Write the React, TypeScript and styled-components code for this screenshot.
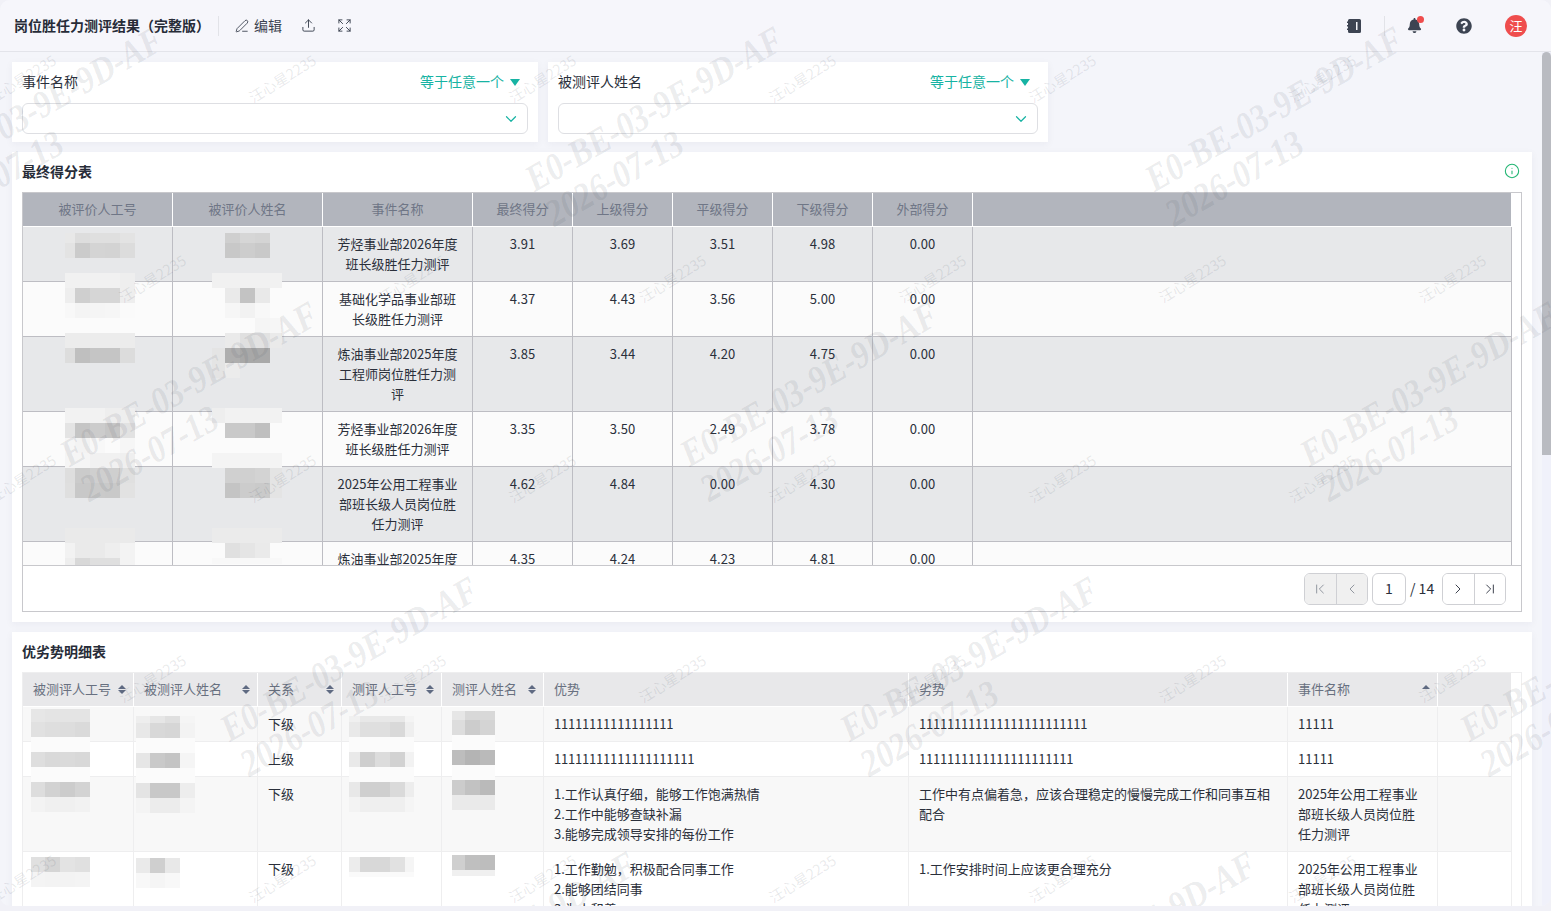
import React from "react";
import styled, { createGlobalStyle } from "styled-components";
import {
  ChevronDown,
  ChevronFirst,
  ChevronLast,
  ChevronLeft,
  ChevronRight,
  Expand,
  Info,
  PenLine,
  Upload,
} from "lucide-react";
import { FaBell, FaQuestionCircle } from "react-icons/fa";

const FONT = `"Noto Sans CJK SC", "Noto Sans", sans-serif`;

const GlobalStyle = createGlobalStyle`
  html, body {
    margin: 0;
    height: 911px;
    overflow: hidden;
    background: #f1f1f7;
    font-family: ${FONT};
  }
  * { box-sizing: border-box; }
`;

const Shell = styled.div`
  position: relative;
  height: 906px;
  display: flex;
  flex-direction: column;
  overflow: hidden;
  border-radius: 10px;
  background: #f4f5fa;
`;

const Header = styled.header`
  flex: none;
  height: 52px;
  display: flex;
  align-items: center;
  padding: 0 24px 0 14px;
  background: #f6f6fb;
  border-bottom: 1px solid #e3e4ea;
  color: #333a48;
`;

const PageTitle = styled.h1`
  margin: 0 0 2px;
  font-size: 14px;
  font-weight: 700;
  color: #272c38;
  white-space: nowrap;
`;

const Divider = styled.span`
  width: 1px;
  height: 20px;
  background: #e2e3e8;
  margin: ${(p: { $m: string }) => p.$m};
`;

const ToolButton = styled.span`
  display: inline-flex;
  align-items: center;
  gap: 5px;
  font-size: 14px;
  margin-right: ${(p: { $mr: number }) => p.$mr}px;
  color: #3b4250;
`;

const ToolLabel = styled.span`
  margin-bottom: 2px;
`;

const Spacer = styled.div`
  flex: 1;
`;

const IconSlot = styled.span`
  position: relative;
  display: inline-flex;
  color: #3d4452;
  margin-left: ${(p: { $ml: number }) => p.$ml}px;
`;

const RedDot = styled.span`
  position: absolute;
  top: -2px;
  right: -2px;
  width: 7px;
  height: 7px;
  border-radius: 50%;
  background: #ef4d4d;
`;

const Avatar = styled.span`
  width: 22px;
  height: 22px;
  margin-left: 33px;
  border-radius: 50%;
  background: #ef4d4d;
  color: #fff;
  font-size: 13px;
  display: flex;
  align-items: center;
  justify-content: center;
`;

const Body = styled.div`
  flex: 1;
  min-height: 0;
  display: flex;
`;

const Main = styled.main`
  flex: none;
  width: 1542px;
  padding: 10px 10px 0 12px;
  overflow: hidden;
`;

const Scrollbar = styled.div`
  flex: 1;
  background: #f0f1fa;
`;

const Thumb = styled.div`
  height: 403px;
  border-radius: 5px 5px 0 0;
  background: #b9bbc1;
`;

const FilterRow = styled.div`
  display: flex;
  gap: 10px;
  margin-bottom: 10px;
`;

const FilterCard = styled.div`
  width: ${(p: { $w: number }) => p.$w}px;
  height: 80px;
  padding: 9px 10px 0;
  background: #fff;
  box-shadow: 0 2px 8px rgba(30, 40, 80, 0.05);
`;

const FilterTop = styled.div`
  height: 20px;
  margin-bottom: 12px;
  display: flex;
  align-items: center;
  justify-content: space-between;
  font-size: 14px;
  color: #2a2f3a;
`;

const Operator = styled.span`
  display: inline-flex;
  align-items: center;
  gap: 6px;
  margin-right: 8px;
  color: #17b3a3;
`;

const Triangle = styled.i`
  width: 0;
  height: 0;
  border-left: 5.5px solid transparent;
  border-right: 5.5px solid transparent;
  border-top: 7px solid #17b3a3;
  margin-top: 3px;
`;

const SelectBox = styled.div`
  height: 31px;
  padding-right: 7px;
  border: 1px solid #dedfe3;
  border-radius: 6px;
  display: flex;
  align-items: center;
  justify-content: flex-end;
  color: #17b3a3;
`;

const Card = styled.section`
  padding: 0 10px 10px;
  margin-bottom: 10px;
  background: #fff;
  box-shadow: 0 2px 8px rgba(30, 40, 80, 0.05);
`;

const CardHead = styled.div`
  height: 40px;
  padding: 0 2px 2px 0;
  display: flex;
  align-items: center;
  justify-content: space-between;
  font-size: 14px;
  font-weight: 700;
  color: #272c38;
`;

const Frame = styled.div`
  border: 1px solid ${(p: { $line: string }) => p.$line};
  background: #fff;
`;

const ScrollArea = styled.div`
  position: relative;
  height: 372px;
  overflow: hidden;
`;

const OpenArea = styled.div`
  position: relative;
`;

const Table = styled.table`
  width: 1489px;
  table-layout: fixed;
  border-collapse: separate;
  border-spacing: 0;
  font-size: 13px;
  line-height: 20px;
`;

const Th = styled.th<{ $dark?: boolean }>`
  height: 34px;
  padding: 0 10px 1px;
  font-weight: 400;
  text-align: ${(p) => (p.$dark ? "center" : "left")};
  background: ${(p) => (p.$dark ? "#b2b5bd" : "#e8e8ea")};
  color: ${(p) => (p.$dark ? "#6f7686" : "#687080")};
  border-right: 1px solid #fff;
  border-bottom: 1px solid #fff;
`;

const ThInner = styled.span`
  display: flex;
  align-items: center;
  justify-content: space-between;
`;

const SortMark = styled.span`
  display: inline-flex;
  flex-direction: column;
  gap: 1px;
  margin-right: -3px;
`;

const Arrow = styled.i<{ $down?: boolean; $off?: boolean }>`
  width: 0;
  height: 0;
  border-left: 4px solid transparent;
  border-right: 4px solid transparent;
  ${(p) => (p.$down ? "border-top" : "border-bottom")}: 4.5px solid
    ${(p) => (p.$off ? "transparent" : "#5f6a82")};
`;

const Td = styled.td<{ $dark?: boolean; $shade: boolean }>`
  padding: 7px 10px;
  vertical-align: top;
  text-align: ${(p) => (p.$dark ? "center" : "left")};
  color: #2a2f3a;
  background: ${(p) =>
    p.$dark
      ? p.$shade
        ? "#e7e8ea"
        : "#fbfbfb"
      : p.$shade
        ? "#f8f8f8"
        : "#fff"};
  border-right: 1px solid ${(p) => (p.$dark ? "#bdbdc3" : "#eeeeef")};
  border-bottom: 1px solid ${(p) => (p.$dark ? "#bdbdc3" : "#eeeeef")};
`;

const Line = styled.div<{ $digits?: boolean }>`
  white-space: nowrap;
  letter-spacing: ${(p) => (p.$digits ? "-0.2px" : "normal")};
`;

const Pager = styled.div`
  height: 46px;
  padding-right: 15px;
  border-top: 1px solid #c8c8cc;
  display: flex;
  align-items: center;
  justify-content: flex-end;
  font-size: 14px;
  color: #2a2f3a;
`;

const PageGroup = styled.div`
  display: flex;
  width: 64px;
  height: 32px;
  border: 1px solid #cfd0d4;
  border-radius: 6px;
  overflow: hidden;
`;

const PageButton = styled.span<{ $off?: boolean }>`
  flex: 1;
  display: flex;
  align-items: center;
  justify-content: center;
  background: ${(p) => (p.$off ? "#f0f0f0" : "#fff")};
  color: ${(p) => (p.$off ? "#8b909a" : "#2f3542")};
  & + & {
    border-left: 1px solid #cfd0d4;
  }
`;

const PageInput = styled.span`
  width: 34px;
  height: 32px;
  margin-left: 4px;
  padding-bottom: 2px;
  border: 1px solid #cfd0d4;
  border-radius: 6px;
  display: flex;
  align-items: center;
  justify-content: center;
`;

const PageTotal = styled.span`
  margin: 0 8px 2px 4px;
  width: 24px;
  white-space: nowrap;
`;

const MosaicBox = styled.div<{ $left: number; $top: number }>`
  position: absolute;
  left: ${(p) => p.$left}px;
  top: ${(p) => p.$top}px;
  pointer-events: none;
`;

const MosaicRow = styled.div<{ $h: number }>`
  display: flex;
  height: ${(p) => p.$h}px;
`;

const Tile = styled.i<{ $w: number; $c: string }>`
  flex: none;
  width: ${(p) => p.$w}px;
  background: ${(p) => (p.$c === "--" ? "transparent" : `#${p.$c}${p.$c}${p.$c}`)};
`;

const Marks = styled.div`
  position: absolute;
  inset: 0;
  overflow: hidden;
  pointer-events: none;
`;

const SmallMark = styled.span<{ $x: number; $y: number }>`
  position: absolute;
  left: ${(p) => p.$x}px;
  top: ${(p) => p.$y}px;
  transform: translate(-50%, -50%) rotate(-32deg);
  font-size: 14.5px;
  white-space: nowrap;
  color: rgba(70, 75, 90, 0.12);
`;

const BigMark = styled.div<{ $x: number; $y: number }>`
  position: absolute;
  left: ${(p) => p.$x}px;
  top: ${(p) => p.$y}px;
  transform-origin: 0 0;
  transform: rotate(-30deg) scaleX(0.86);
  font-family: "Liberation Serif", serif;
  font-style: italic;
  font-weight: 700;
  font-size: 38px;
  line-height: 40px;
  white-space: nowrap;
  color: rgba(70, 75, 90, 0.11);
`;

type MosaicRows = [number, string][];

const Mosaic = ({ left, top, widths, rows }: { left: number; top: number; widths: number[]; rows: MosaicRows }) => (
  <MosaicBox $left={left} $top={top}>
    {rows.map(([h, shades], i) => (
      <MosaicRow key={i} $h={h}>
        {shades
          .split(" ")
          .filter(Boolean)
          .map((c, j) => (
            <Tile key={j} $w={widths[j]} $c={c} />
          ))}
      </MosaicRow>
    ))}
  </MosaicBox>
);

const finalCols = [150, 150, 150, 100, 100, 100, 100, 100, 539];
const finalHead = ["被评价人工号", "被评价人姓名", "事件名称", "最终得分", "上级得分", "平级得分", "下级得分", "外部得分", ""];
const finalRows: [string[], string[]][] = [
  [["芳烃事业部2026年度", "班长级胜任力测评"], ["3.91", "3.69", "3.51", "4.98", "0.00"]],
  [["基础化学品事业部班", "长级胜任力测评"], ["4.37", "4.43", "3.56", "5.00", "0.00"]],
  [["炼油事业部2025年度", "工程师岗位胜任力测", "评"], ["3.85", "3.44", "4.20", "4.75", "0.00"]],
  [["芳烃事业部2026年度", "班长级胜任力测评"], ["3.35", "3.50", "2.49", "3.78", "0.00"]],
  [["2025年公用工程事业", "部班长级人员岗位胜", "任力测评"], ["4.62", "4.84", "0.00", "4.30", "0.00"]],
  [["炼油事业部2025年度", "工程师岗位胜任力测", "评"], ["4.35", "4.24", "4.23", "4.81", "0.00"]],
];

const detailCols = [111, 124, 84, 100, 102, 365, 379, 150, 74];
const detailHead = ["被测评人工号", "被测评人姓名", "关系", "测评人工号", "测评人姓名", "优势", "劣势", "事件名称", ""];
const eventLines = ["2025年公用工程事业", "部班长级人员岗位胜", "任力测评"];
const detailRows: [string, string[], string[], string[]][] = [
  ["下级", ["1".repeat(17)], ["1".repeat(24)], ["11111"]],
  ["上级", ["1".repeat(20)], ["1".repeat(22)], ["11111"]],
  [
    "下级",
    ["1.工作认真仔细，能够工作饱满热情", "2.工作中能够查缺补漏", "3.能够完成领导安排的每份工作"],
    ["工作中有点偏着急，应该合理稳定的慢慢完成工作和同事互相", "配合"],
    eventLines,
  ],
  [
    "下级",
    ["1.工作勤勉，积极配合同事工作", "2.能够团结同事", "3.为人和善"],
    ["1.工作安排时间上应该更合理充分"],
    eventLines,
  ],
];

const finalMosaics = [
  {
    left: 42,
    widths: [10, 15, 15, 15, 15],
    rows: [
      [10, "e8 dd df df e3"],
      [15, "e3 cb d4 d3 dc"],
      [15, ""],
      [15, "f1 f1 f1 f1 ee"],
      [15, "ee cf d6 d6 ee"],
      [15, "f8 f4 f5 f6 fa"],
      [15, "fb fb fb fb fb"],
      [15, "ec ec ec ec ec"],
      [15, "dd bf c5 c5 dc"],
      [45, ""],
      [15, "f2 f2 f2 ee ee"],
      [15, "e4 c5 cc c6 e2"],
      [15, "f6 f3 f8 fb f6"],
      [15, "f5 f5 f1 f1 ef"],
      [15, "de cb cf cf e0"],
      [15, "df c8 ca c9 e2"],
      [30, ""],
      [15, "ea ea ea ea ea"],
      [15, "f2 ea ea ee f3"],
      [8, "ee d8 df df f3"],
    ] as MosaicRows,
  },
  {
    left: 189,
    widths: [13, 15, 15, 15, 12],
    rows: [
      [10, "-- cf d6 d4 --"],
      [15, "-- c8 cd c9 --"],
      [15, ""],
      [15, "f1 f1 f1 f1 f1"],
      [15, "-- ea c3 e9 --"],
      [15, "-- f6 f2 f8 --"],
      [15, "-- -- -- f5 f6"],
      [15, "-- ea e0 e2 ea"],
      [15, "e4 ae a8 a9 --"],
      [15, "e4 ec -- -- --"],
      [30, ""],
      [15, "ee f2 f2 f2 f2"],
      [15, "-- c9 c9 bf --"],
      [15, ""],
      [15, "f4 f4 f4 f4 f4"],
      [15, "-- d0 d0 d3 e4"],
      [15, "-- c4 cc ca e4"],
      [30, ""],
      [15, "eb eb eb eb eb"],
      [15, "-- e0 e5 ea --"],
      [6, "f8 f8 f8 f8 f8"],
    ] as MosaicRows,
  },
];

const detailMosaics = [
  {
    left: 8,
    widths: [14, 15, 15, 15],
    rows: [
      [13, "e6 e4 e4 e4"],
      [15, "e1 de dd da"],
      [15, "fb fb fb fb"],
      [15, "de d9 da d8"],
      [15, "fb fb fb fb"],
      [15, "dd d2 cc d3"],
      [15, "f3 f0 f0 f2"],
      [45, ""],
      [15, "e0 d5 e3 e0"],
      [15, "f4 f3 f3 f4"],
    ] as MosaicRows,
  },
  {
    left: 113,
    widths: [14, 15, 15, 15],
    rows: [
      [7, ""],
      [7, "ee e6 df f5"],
      [15, "e8 d8 d6 f3"],
      [15, "fb fb fb fb"],
      [15, "e6 c9 c4 f5"],
      [15, "fb fb fb fb"],
      [15, "e4 c8 c8 ed"],
      [15, "f4 ec ec f4"],
      [45, ""],
      [15, "ea cf e8 --"],
      [15, "f8 f5 f8 --"],
    ] as MosaicRows,
  },
  {
    left: 326,
    widths: [11, 15, 15, 15, 9],
    rows: [
      [7, ""],
      [6, "f0 e8 e8 e8 f4"],
      [15, "e9 df df d9 ef"],
      [15, "fb fb fb fb fb"],
      [15, "e9 ce dc d2 f2"],
      [15, "fb fb fb fb fb"],
      [15, "e8 cf cf da ed"],
      [15, "f3 ef ef ef f5"],
      [45, ""],
      [15, "ec d8 d8 e1 f5"],
      [5, "fa fa fa fa fa"],
    ] as MosaicRows,
  },
  {
    left: 429,
    widths: [13, 15, 15],
    rows: [
      [2, ""],
      [9, "e6 d8 d8"],
      [15, "dd cc d4"],
      [15, "fb fb fb"],
      [15, "bd b4 ba"],
      [15, "fb fb fb"],
      [15, "cc c2 ba"],
      [15, "ea ea ea"],
      [45, ""],
      [15, "cf bf bd"],
      [6, "f0 f0 f0"],
    ] as MosaicRows,
  },
];

const NotebookIcon = () => (
  <svg width="16" height="16" viewBox="0 0 16 16" fill="currentColor">
    <path d="M3.5 1h10A1.500 1.500 0 0 1 15 2.500v11a1.500 1.500 0 0 1-1.500 1.500h-10A1.500 1.500 0 0 1 2 13.500V12H1V10.500h1v-2H1V7h1V5H1V3.500h1v-1A1.500 1.500 0 0 1 3.500 1z" />
    <rect x="10" y="4" width="1.500" height="8" fill="#f6f6fb" />
  </svg>
);

const smallMarks: [number, number][] = [];
[78, 478, 878].forEach((y) => [22, 282, 542, 802, 1062, 1322].forEach((x) => smallMarks.push([x, y])));
[278, 678].forEach((y) => [152, 412, 672, 932, 1192, 1452].forEach((x) => smallMarks.push([x, y])));

const bigMarks: [number, number][] = [];
[-102, 518, 1138].forEach((x) => bigMarks.push([x, 164]));
[53, 673, 1293].forEach((x) => bigMarks.push([x, 439]));
[213, 833, 1453].forEach((x) => bigMarks.push([x, 714]));
[371, 991].forEach((x) => bigMarks.push([x, 989]));

export default function App() {
  return (
    <>
      <GlobalStyle />
      <Shell>
        <Header>
          <PageTitle>岗位胜任力测评结果（完整版）</PageTitle>
          <Divider $m="0 16px 0 8px" />
          <ToolButton $mr={19}>
            <PenLine size={14} strokeWidth={1.5} />
            <ToolLabel>编辑</ToolLabel>
          </ToolButton>
          <ToolButton $mr={21}>
            <Upload size={15} strokeWidth={1.5} />
          </ToolButton>
          <ToolButton $mr={0}>
            <Expand size={15} strokeWidth={1.5} />
          </ToolButton>
          <Spacer />
          <IconSlot $ml={0}>
            <NotebookIcon />
          </IconSlot>
          <Divider $m="0 0 0 22px" />
          <IconSlot $ml={22}>
            <FaBell size={15} />
            <RedDot />
          </IconSlot>
          <IconSlot $ml={34}>
            <FaQuestionCircle size={16} />
          </IconSlot>
          <Avatar>汪</Avatar>
        </Header>
        <Body>
          <Main>
            <FilterRow>
              <FilterCard $w={526}>
                <FilterTop>
                  事件名称
                  <Operator>
                    等于任意一个
                    <Triangle />
                  </Operator>
                </FilterTop>
                <SelectBox>
                  <ChevronDown size={18} strokeWidth={1.6} />
                </SelectBox>
              </FilterCard>
              <FilterCard $w={500}>
                <FilterTop>
                  被测评人姓名
                  <Operator>
                    等于任意一个
                    <Triangle />
                  </Operator>
                </FilterTop>
                <SelectBox>
                  <ChevronDown size={18} strokeWidth={1.6} />
                </SelectBox>
              </FilterCard>
            </FilterRow>

            <Card>
              <CardHead>
                最终得分表
                <Info size={16} strokeWidth={1.6} color="#22b573" />
              </CardHead>
              <Frame $line="#c8c8cc">
                <ScrollArea>
                  <Table>
                    <colgroup>
                      {finalCols.map((w, i) => (
                        <col key={i} width={w} />
                      ))}
                    </colgroup>
                    <thead>
                      <tr>
                        {finalHead.map((h, i) => (
                          <Th key={i} $dark>
                            {h}
                          </Th>
                        ))}
                      </tr>
                    </thead>
                    <tbody>
                      {finalRows.map(([event, scores], r) => {
                        const shade = r % 2 === 0;
                        return (
                          <tr key={r}>
                            <Td $dark $shade={shade} />
                            <Td $dark $shade={shade} />
                            <Td $dark $shade={shade}>
                              {event.map((t) => (
                                <Line key={t}>{t}</Line>
                              ))}
                            </Td>
                            {scores.map((s, i) => (
                              <Td key={i} $dark $shade={shade}>
                                {s}
                              </Td>
                            ))}
                            <Td $dark $shade={shade} />
                          </tr>
                        );
                      })}
                    </tbody>
                  </Table>
                  {finalMosaics.map((m, i) => (
                    <Mosaic key={i} top={40} left={m.left} widths={m.widths} rows={m.rows} />
                  ))}
                </ScrollArea>
                <Pager>
                  <PageGroup>
                    <PageButton $off>
                      <ChevronFirst size={16} strokeWidth={1.4} />
                    </PageButton>
                    <PageButton $off>
                      <ChevronLeft size={16} strokeWidth={1.4} />
                    </PageButton>
                  </PageGroup>
                  <PageInput>1</PageInput>
                  <PageTotal>/ 14</PageTotal>
                  <PageGroup>
                    <PageButton>
                      <ChevronRight size={16} strokeWidth={1.4} />
                    </PageButton>
                    <PageButton>
                      <ChevronLast size={16} strokeWidth={1.4} />
                    </PageButton>
                  </PageGroup>
                </Pager>
              </Frame>
            </Card>

            <Card>
              <CardHead>优劣势明细表</CardHead>
              <Frame $line="#eeeeef">
                <OpenArea>
                  <Table>
                    <colgroup>
                      {detailCols.map((w, i) => (
                        <col key={i} width={w} />
                      ))}
                    </colgroup>
                    <thead>
                      <tr>
                        {detailHead.map((h, i) => (
                          <Th key={i}>
                            {i < 5 || i === 7 ? (
                              <ThInner>
                                {h}
                                <SortMark>
                                  <Arrow />
                                  <Arrow $down $off={i === 7} />
                                </SortMark>
                              </ThInner>
                            ) : (
                              h
                            )}
                          </Th>
                        ))}
                      </tr>
                    </thead>
                    <tbody>
                      {detailRows.map(([relation, good, bad, event], r) => {
                        const shade = r % 2 === 0;
                        return (
                          <tr key={r}>
                            <Td $shade={shade} />
                            <Td $shade={shade} />
                            <Td $shade={shade}>{relation}</Td>
                            <Td $shade={shade} />
                            <Td $shade={shade} />
                            <Td $shade={shade}>
                              {good.map((t) => (
                                <Line key={t} $digits={r < 2}>{t}</Line>
                              ))}
                            </Td>
                            <Td $shade={shade}>
                              {bad.map((t) => (
                                <Line key={t} $digits={r < 2}>{t}</Line>
                              ))}
                            </Td>
                            <Td $shade={shade}>
                              {event.map((t) => (
                                <Line key={t}>{t}</Line>
                              ))}
                            </Td>
                            <Td $shade={shade} />
                          </tr>
                        );
                      })}
                    </tbody>
                  </Table>
                  {detailMosaics.map((m, i) => (
                    <Mosaic key={i} top={36} left={m.left} widths={m.widths} rows={m.rows} />
                  ))}
                </OpenArea>
              </Frame>
            </Card>
          </Main>
          <Scrollbar>
            <Thumb />
          </Scrollbar>
        </Body>
        <Marks>
          {smallMarks.map(([x, y]) => (
            <SmallMark key={`${x}-${y}`} $x={x} $y={y}>
              汪心星2235
            </SmallMark>
          ))}
          {bigMarks.map(([x, y]) => (
            <BigMark key={`${x}-${y}`} $x={x} $y={y}>
              E0-BE-03-9E-9D-AF
              <br />
              2026-07-13
            </BigMark>
          ))}
        </Marks>
      </Shell>
    </>
  );
}
